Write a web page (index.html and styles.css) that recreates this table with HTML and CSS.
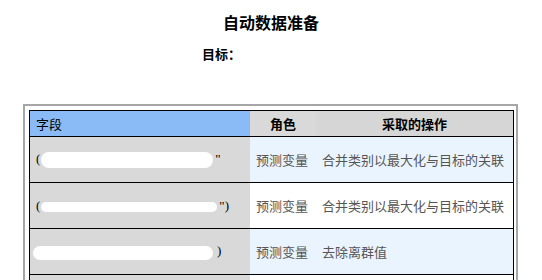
FILE: index.html
```html
<!DOCTYPE html>
<html lang="zh-CN">
<head>
    <meta charset="UTF-8">
    <title>自动数据准备</title>
    <link rel="stylesheet" href="styles.css">
</head>
<body>
    <h1 class="title">自动数据准备</h1>
    <p class="target">目标：</p>

    <!-- Field summary table -->
    <div class="frame">
        <table class="fields">
            <thead>
                <tr>
                    <th class="col-field">字段</th>
                    <th class="col-role">角色</th>
                    <th class="col-action">采取的操作</th>
                </tr>
            </thead>
            <tbody>
                <tr class="shaded">
                    <td class="col-field">(<span class="mask mask-a"></span>"</td>
                    <td class="col-role">预测变量</td>
                    <td class="col-action">合并类别以最大化与目标的关联</td>
                </tr>
                <tr>
                    <td class="col-field">(<span class="mask mask-b"></span>")</td>
                    <td class="col-role">预测变量</td>
                    <td class="col-action">合并类别以最大化与目标的关联</td>
                </tr>
                <tr class="shaded">
                    <td class="col-field"><span class="mask mask-c"></span>)</td>
                    <td class="col-role">预测变量</td>
                    <td class="col-action">去除离群值</td>
                </tr>
                <tr>
                    <td class="col-field">&nbsp;</td>
                    <td class="col-role"></td>
                    <td class="col-action"></td>
                </tr>
            </tbody>
        </table>
    </div>
</body>
</html>
```

FILE: styles.css
```css
/* Page */
body {
    margin: 0;
    font-family: "Liberation Serif", "Noto Sans CJK SC", serif;
    color: #000;
    background: #fff;
    overflow: hidden;
}

.title {
    margin: 14px 0 0;
    font-size: 16px;
    font-weight: bold;
    line-height: 20px;
    text-align: center;
}

.target {
    margin: 13px 0 0 202px;
    font-size: 13px;
    font-weight: bold;
    line-height: 16px;
}

/* Outer frame around the table */
.frame {
    margin: 41px 24px 0 23px;
    padding: 4px 4px 0 4px;
    border: 2px solid #a6a6a6;
    border-bottom: none;
    height: 170px;
    overflow: hidden;
}

.fields {
    width: 485px;
    border-collapse: collapse;
    border: 1.5px solid #000;
    font-size: 13px;
}

.fields th,
.fields td {
    padding: 0 6px;
    white-space: nowrap;
}

.fields th {
    height: 25px;
    font-weight: bold;
    background: #d9d9d9;
    border-bottom: 1.5px solid #000;
}

.fields td {
    height: 45px;
    color: #555;
    border-bottom: 1.5px solid #000;
    background: #fff;
}

.fields th.col-field {
    text-align: left;
    font-weight: normal;
    background: #8abbf7;
}

.fields td.col-field {
    background: #d9d9d9;
    color: #000;
    width: 208px;
}

.col-role {
    width: 54px;
    text-align: center;
}

.fields td.col-role {
    text-align: left;
}

.fields th.col-action {
    background: #d6d6d6;
}

.fields tr.shaded td.col-role,
.fields tr.shaded td.col-action {
    background: #eaf4fe;
}

/* White blocks hiding field names */
.mask {
    display: inline-block;
    vertical-align: middle;
    height: 16px;
    background: #fff;
    border-radius: 8px;
}

.mask-a {
    width: 172px;
    margin: 0 2px 0 1px;
}

.mask-b {
    width: 176px;
    height: 10px;
    margin: 0 2px 0 1px;
}

.mask-c {
    width: 180px;
    height: 14px;
    margin: 0 4px 0 -3px;
}
```
